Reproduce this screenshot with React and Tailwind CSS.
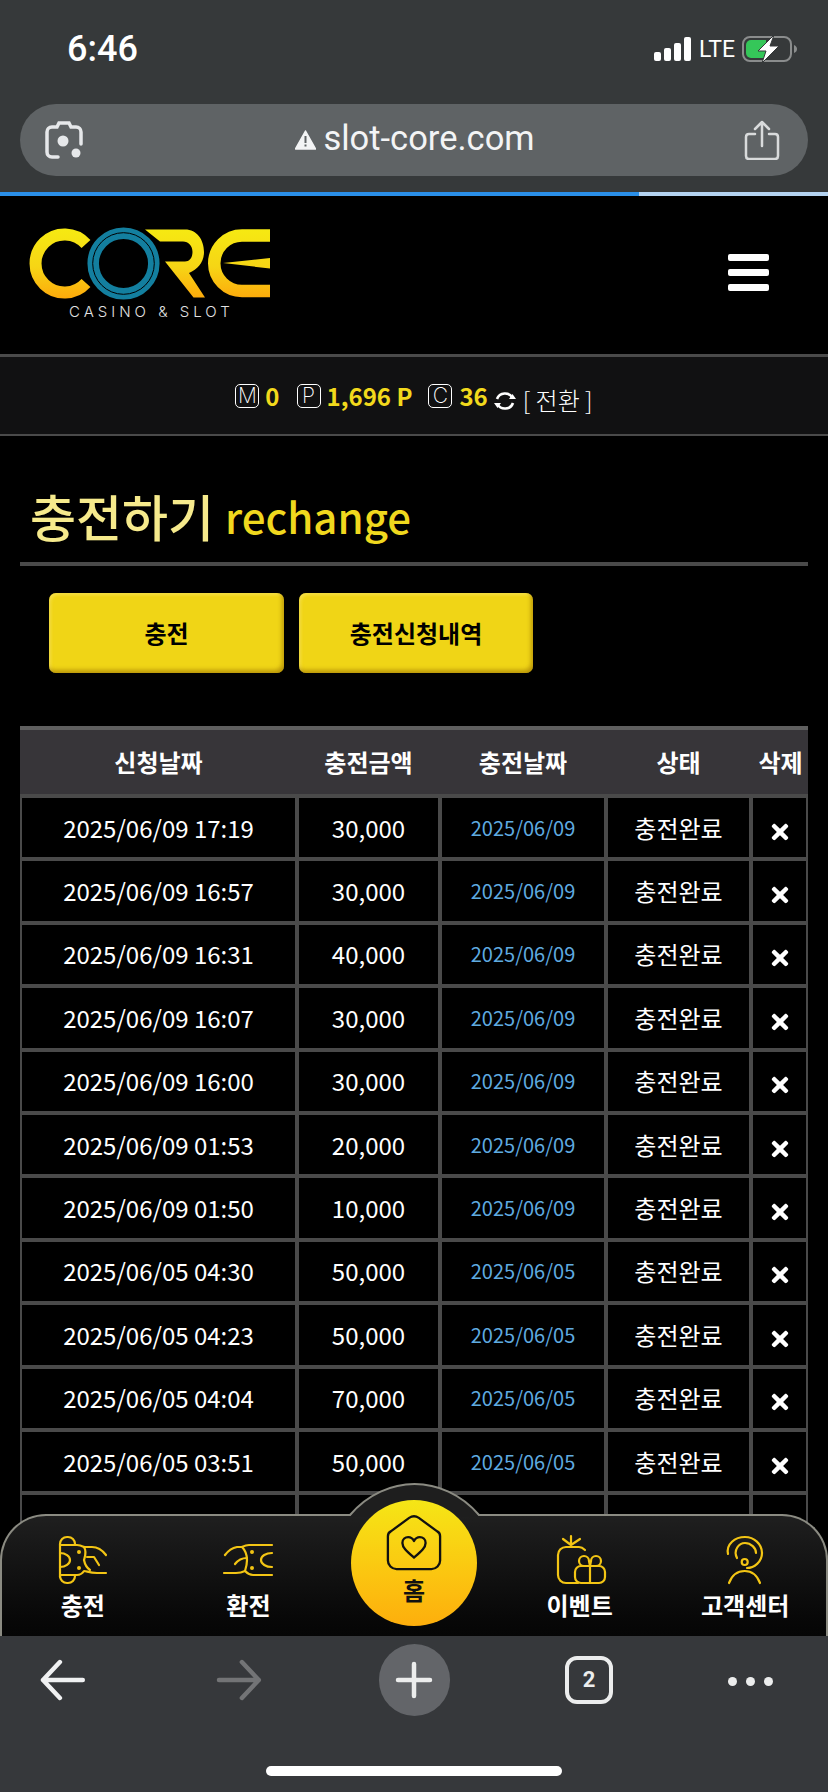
import React from 'react';
import { FaTimes } from 'react-icons/fa';

const rows = [
  ['2025/06/09 17:19', '30,000', '2025/06/09'],
  ['2025/06/09 16:57', '30,000', '2025/06/09'],
  ['2025/06/09 16:31', '40,000', '2025/06/09'],
  ['2025/06/09 16:07', '30,000', '2025/06/09'],
  ['2025/06/09 16:00', '30,000', '2025/06/09'],
  ['2025/06/09 01:53', '20,000', '2025/06/09'],
  ['2025/06/09 01:50', '10,000', '2025/06/09'],
  ['2025/06/05 04:30', '50,000', '2025/06/05'],
  ['2025/06/05 04:23', '50,000', '2025/06/05'],
  ['2025/06/05 04:04', '70,000', '2025/06/05'],
  ['2025/06/05 03:51', '50,000', '2025/06/05'],
  ['', '', ''],
];

const columns = 'grid grid-cols-[273px_139px_162px_141px_53px] gap-x-1';

function Logo() {
  return (
    <svg width="260" height="88" viewBox="0 0 260 88" className="block">
      <defs>
        <linearGradient id="coreGold" gradientUnits="userSpaceOnUse" x1="0" y1="8" x2="0" y2="79">
          <stop offset="0" stopColor="#f6ea12" />
          <stop offset="0.55" stopColor="#f6d515" />
          <stop offset="1" stopColor="#fda90b" />
        </linearGradient>
      </defs>
      <path d="M66 24 A29 29 0 1 0 66 63" fill="none" stroke="url(#coreGold)" strokeWidth="12" />
      <path
        d="M125 9.500 H165 C177 9.500 184 20 184 32 C184 42 178 49 169 53 L185 77.500 H173.500 L145 41.500 H165 C170 41.500 172.500 37 172.500 32 C172.500 26 168.500 21.500 163 21.500 H140 Z"
        fill="url(#coreGold)"
      />
      <path d="M250 15.500 H222 A27.700 27.700 0 0 0 222 71 H250" fill="none" stroke="url(#coreGold)" strokeWidth="12.500" />
      <path d="M203 43 L250 38 V48.500 Z" fill="url(#coreGold)" />
      <circle cx="103.500" cy="43.500" r="30.300" fill="none" stroke="#137f9f" strokeWidth="11.500" />
      <circle cx="103.500" cy="43.500" r="30.800" fill="none" stroke="#000" strokeWidth="1" />
    </svg>
  );
}

function BoxLetter({ children }) {
  return (
    <span className="flex w-6 h-6 items-center justify-center rounded-[5px] border border-white text-white text-[21px] font-extralight leading-none [font-family:Inter,sans-serif]">
      {children}
    </span>
  );
}

function RefreshIcon() {
  return (
    <svg width="22" height="22" viewBox="0 0 22 22" fill="none" stroke="#fff" strokeWidth="2.600" className="ml-[6px] mt-[11px]">
      <path d="M3 9 A8.500 8.500 0 0 1 18.500 8" />
      <path d="M19 13 A8.500 8.500 0 0 1 3.500 14" />
      <path d="M15 9 H22 L18.500 4 Z M0 13 H7 L3.500 18 Z" fill="#fff" stroke="none" />
    </svg>
  );
}

function ChargeIcon() {
  return (
    <svg width="60" height="60" viewBox="0 0 60 60" fill="none" stroke="#f3c514" strokeWidth="2.200" strokeLinecap="round" strokeLinejoin="round">
      <path d="M9 47 V14 A7 7 0 0 1 16 7 H17 A7 7 0 0 1 24 14 V15" />
      <path d="M9 46 A7 7 0 0 0 16 53 H17 A7 7 0 0 0 24 46 V45" />
      <path d="M9 15 H26 C29 15 31 16 33 17 H41 C47 17 52 21 55 25" />
      <path d="M9 45 H26 C29 45 31 44 33 41 C36 41 38 43 46 43 H55" />
      <path d="M9 23 A10 7 0 0 1 9 37" />
      <path d="M33 17 C36 22 34 26 33 30 C34 35 36 38 39 40" />
      <path d="M36 27 L43 27 L48 35" />
      <circle cx="28" cy="22" r="0.900" fill="#f3c514" />
      <circle cx="28" cy="38" r="0.900" fill="#f3c514" />
    </svg>
  );
}

function ExchangeIcon() {
  return (
    <svg width="60" height="60" viewBox="170 0 60 60" fill="none" stroke="#f3c514" strokeWidth="2.200" strokeLinecap="round" strokeLinejoin="round">
      <path d="M222 15 H199 C196 15 194 16 192 17 H187 C182 18 178 21 175 25" />
      <path d="M222 45 H203 C199 45 197 43 195 41 C191 43 188 43 186 43 H174" />
      <path d="M222 23 A11 7 0 0 0 222 37" />
      <path d="M192 17 C196 21 197 26 197 30 C197 35 196 38 195 41" />
      <path d="M197 28 C192 28 188 30 185 34" />
      <circle cx="202" cy="22" r="0.900" fill="#f3c514" />
      <circle cx="202" cy="38" r="0.900" fill="#f3c514" />
    </svg>
  );
}

function EventIcon() {
  return (
    <svg width="60" height="60" viewBox="8 0 60 60" fill="none" stroke="#f3c514" strokeWidth="2.200" strokeLinecap="round" strokeLinejoin="round">
      <path d="M43 20 C41 18 40 17 37 17 H24 A8 8 0 0 0 16 25 V45 A8 8 0 0 0 24 53 H36" />
      <path d="M29 15 V6 M29 15 L21 9 M29 15 L38 9" />
      <rect x="33" y="36" width="30" height="17" rx="6" />
      <path d="M48 36 V53" />
      <path d="M48 36 H42 A5 5 0 1 1 47 31 L48 36 L49 31 A5 5 0 1 1 54 36 H48" />
    </svg>
  );
}

function SupportIcon() {
  return (
    <svg width="60" height="60" viewBox="176 0 60 60" fill="none" stroke="#f3c514" strokeWidth="2.200" strokeLinecap="round" strokeLinejoin="round">
      <path d="M189 24 C187 14 196 7 206 7 C215 7 223 14 223 23 C223 32 215 38 208 38" />
      <path d="M198 28 C194 20 200 13 206 13 C212 13 217 18 217 23" />
      <circle cx="205.700" cy="32" r="3" />
      <path d="M190 53 C193 45 199 41 205.700 41 C212 41 218 45 221 53" />
    </svg>
  );
}

function NavItem({ icon, label, iconClass }) {
  return (
    <div className="flex flex-col items-center pt-[14px]">
      <div className={iconClass}>{icon}</div>
      <span className="mt-[-1px] text-white text-2xl font-bold leading-8 whitespace-nowrap">{label}</span>
    </div>
  );
}

function BottomNav() {
  return (
    <div className="absolute bottom-0 left-0 w-[828px] h-[122px] rounded-t-[46px] border-x-2 border-t-2 border-[#8b8b82] bg-gradient-to-b from-[#1f1f1f] to-[#050505]">
      <svg width="137" height="34" viewBox="0 0 137 34" className="absolute left-[344px] top-[-33px]">
        <path d="M0 33 H4 C22 12 46 1 68.500 1 C91 1 115 12 133 33 H137 V34 H0 Z" fill="#1e1e1e" />
        <path d="M0 32 H4 C22 11 46 1 68.500 1 C91 1 115 11 133 32 H137" fill="none" stroke="#8b8b82" strokeWidth="2" />
      </svg>
      <div className="grid grid-cols-5 -mx-0.5">
        <NavItem icon={<ChargeIcon />} label="충전" iconClass="-ml-[3px]" />
        <NavItem icon={<ExchangeIcon />} label="환전" iconClass="ml-[3px]" />
        <div />
        <NavItem icon={<EventIcon />} label="이벤트" />
        <NavItem icon={<SupportIcon />} label="고객센터" />
      </div>
      <div className="absolute left-[349px] top-[-16px] flex flex-col items-center w-[126px] h-[126px] rounded-full bg-gradient-to-b from-[#f5e616] to-[#fdae0c] pt-[14px]">
        <svg width="60" height="58" viewBox="43 33 60 60" fill="none" stroke="#111" strokeWidth="2.400" strokeLinejoin="round">
          <path d="M68 37 L49 51 C47 52 46 54 46 56 V81 A9 9 0 0 0 55 90 H91 A9 9 0 0 0 100 81 V56 C100 54 99 52 97 51 L78 37 C75 35 71 35 68 37 Z" />
          <path d="M73 78 C66 72 61 68 61 63 C61 59 64 57 67 57 C70 57 72 59 73 61 C74 59 76 57 79 57 C82 57 85 59 85 63 C85 68 80 72 73 78 Z" />
        </svg>
        <span className="mt-[2px] text-[#111] text-2xl font-bold leading-8">홈</span>
      </div>
    </div>
  );
}

export default function App() {
  return (
    <div className="w-[828px] h-[1792px] flex flex-col overflow-hidden bg-black [font-family:'Noto_Sans_CJK_KR',sans-serif]">
      {/* browser top */}
      <div className="h-[196px] shrink-0 flex flex-col bg-[#36393a]">
        <div className="h-[104px] flex items-start justify-between pl-[67px] pr-[30px] pt-[29px]">
          <span className="text-white text-[36px] font-medium leading-[40px] [font-family:Roboto,sans-serif]">6:46</span>
          <div className="flex items-center gap-[7px] h-[40px]">
            <svg width="38" height="24" viewBox="0 0 38 24" fill="#fff">
              <rect x="0" y="15" width="7" height="9" rx="2" />
              <rect x="10" y="11" width="7" height="13" rx="2" />
              <rect x="20" y="6" width="7" height="18" rx="2" />
              <rect x="30" y="0" width="7" height="24" rx="2" />
            </svg>
            <span className="text-white text-[23px] leading-none [font-family:Roboto,sans-serif] w-[36px] whitespace-nowrap">LTE</span>
            <svg width="56" height="28" viewBox="0 0 56 28">
              <rect x="1" y="2" width="48" height="24" rx="7" fill="none" stroke="#8b8d8d" strokeWidth="2" />
              <path d="M4 10 A5 5 0 0 1 9 5 H24 V23 H9 A5 5 0 0 1 4 18 Z" fill="#35c759" />
              <path d="M52 10 V18 C54 17 55 16 55 14 C55 12 54 11 52 10 Z" fill="#8b8d8d" />
              <path d="M32 0 L16 16 H24 L20 28 L37 11 H28 Z" fill="#fff" stroke="#36393a" strokeWidth="1" />
            </svg>
          </div>
        </div>
        <div className="mx-5 h-[72px] rounded-[36px] bg-[#5f6365] flex items-center justify-between pl-[24px] pr-[28px]">
          <svg width="40" height="40" viewBox="0 0 40 40" fill="none" stroke="#e6e8ea" strokeWidth="3.500" strokeLinecap="round">
            <path d="M14 37 H8 C5 37 3 35 3 32 V12 C3 9 5 7 8 7 H13 L15 3 H25 L27 7 H32 C35 7 37 9 37 12 V24" />
            <circle cx="19" cy="21" r="5.500" fill="#e6e8ea" stroke="none" />
            <circle cx="32" cy="33" r="4.500" fill="#e6e8ea" stroke="none" />
          </svg>
          <div className="flex items-center gap-[7px] ml-0.5">
            <svg width="21" height="20" viewBox="0 0 21 20">
              <path d="M10.500 1 L20.500 19 H0.500 Z" fill="#f3f4f5" stroke="#f3f4f5" strokeWidth="1.500" strokeLinejoin="round" />
              <rect x="9.500" y="6" width="2" height="7" fill="#5f6365" />
              <rect x="9.500" y="14.500" width="2" height="2" fill="#5f6365" />
            </svg>
            <span className="text-[#f3f4f5] text-[34.500px] leading-none pb-1 [font-family:Roboto,sans-serif]">slot-core.com</span>
          </div>
          <svg width="36" height="40" viewBox="0 0 36 40" fill="none" stroke="#d9dbdc" strokeWidth="2.500" strokeLinecap="round" strokeLinejoin="round">
            <path d="M11 14 H5 C3 14 2 15 2 17 V36 C2 38 3 39 5 39 H31 C33 39 34 38 34 36 V17 C34 15 33 14 31 14 H25" />
            <path d="M18 26 V2 M11 9 L18 2 L25 9" />
          </svg>
        </div>
        <div className="mt-4 h-1 bg-[#b4d3f1]">
          <div className="h-1 w-[639px] bg-[#2a8fe8]" />
        </div>
      </div>

      {/* page */}
      <div className="relative flex-1 overflow-hidden">
        <div className="h-[158px] flex items-start justify-between pl-[20px] pr-[59px] pt-[24px]">
          <div className="flex flex-col">
            <Logo />
            <span className="mt-[-5px] pl-[49px] text-[#e2e2e2] text-[15px] font-light leading-[18px] tracking-[4px] [font-family:Inter,sans-serif]">CASINO &amp; SLOT</span>
          </div>
          <div className="mt-[34px] flex flex-col gap-2">
            <div className="w-[41px] h-[7px] rounded-[2px] bg-white" />
            <div className="w-[41px] h-[7px] rounded-[2px] bg-white" />
            <div className="w-[41px] h-[7px] rounded-[2px] bg-white" />
          </div>
        </div>

        <div className="h-[82px] border-t-[3px] border-b-2 border-[#4a4a4a] bg-[#111112] flex items-center justify-center text-[#f2d91c] text-2xl font-semibold leading-none">
          <BoxLetter>M</BoxLetter>
          <span className="ml-[6px]">0</span>
          <span className="ml-[17px]"><BoxLetter>P</BoxLetter></span>
          <span className="ml-[6px]">1,696 P</span>
          <span className="ml-[16px]"><BoxLetter>C</BoxLetter></span>
          <span className="ml-[7px]">36</span>
          <RefreshIcon />
          <span className="ml-[7px] mt-[8px] text-white font-light whitespace-nowrap">[ 전환 ]</span>
        </div>

        <div className="mx-5 h-[130px] flex items-end border-b-4 border-[#4a4a4a] pl-[10px] pb-[14px]">
          <span className="text-[#f6ea8c] text-[50px] font-medium leading-[66px]">충전하기</span>
          <span className="ml-[11px] text-[#f0d81e] text-[42px] font-medium leading-[64px]">rechange</span>
        </div>

        <div className="flex gap-[15px] pl-[49px] pt-[27px]">
          <button className="w-[235px] h-[80px] rounded-[7px] bg-[#f0d516] shadow-[inset_-2px_-3px_4px_rgba(150,110,0,0.6),inset_2px_2px_3px_rgba(255,240,120,0.5)] text-black text-2xl font-bold">충전</button>
          <button className="w-[234px] h-[80px] rounded-[7px] bg-[#f0d516] shadow-[inset_-2px_-3px_4px_rgba(150,110,0,0.6),inset_2px_2px_3px_rgba(255,240,120,0.5)] text-black text-2xl font-bold">충전신청내역</button>
        </div>

        <div className="mx-5 mt-[53px]">
          <div className={`${columns} h-[68px] items-center border-t-4 border-[#5f5f5f] bg-[#373539] px-0.5 text-white text-2xl font-bold text-center`}>
            <span>신청날짜</span>
            <span>충전금액</span>
            <span>충전날짜</span>
            <span>상태</span>
            <span className="whitespace-nowrap pl-0.5">삭제</span>
          </div>
          <div className="flex flex-col gap-1 bg-[#4a4a4a] p-0.5 pt-1">
            {rows.map((row, i) => (
              <div key={i} className={`${columns} h-[59.4px] text-white text-center`}>
                <div className="bg-black flex items-center justify-center text-2xl">{row[0]}</div>
                <div className="bg-black flex items-center justify-center text-2xl">{row[1]}</div>
                <div className="bg-black flex items-center justify-center text-[20px] text-[#5fabe0]">{row[2]}</div>
                <div className="bg-black flex items-center justify-center text-2xl">{row[0] && '충전완료'}</div>
                <div className="bg-black flex items-center justify-center pt-2">{row[0] && <FaTimes size={24} />}</div>
              </div>
            ))}
          </div>
        </div>

        <BottomNav />
      </div>

      {/* browser bottom */}
      <div className="h-[156px] shrink-0 bg-[#36383b] flex flex-col items-center">
        <div className="w-full h-[120px] flex items-start justify-between pl-[40px] pr-[55px] pt-2">
          <svg width="46" height="72" viewBox="0 0 46 72" fill="none" stroke="#f0f1f2" strokeWidth="4.500" strokeLinecap="round" strokeLinejoin="round">
            <path d="M43 36 H3 M20 18 L3 36 L20 54" />
          </svg>
          <svg width="46" height="72" viewBox="0 0 46 72" fill="none" stroke="#737476" strokeWidth="4.500" strokeLinecap="round" strokeLinejoin="round" className="ml-[130px]">
            <path d="M3 36 H43 M26 18 L43 36 L26 54" />
          </svg>
          <div className="ml-[117px] w-[72px] h-[72px] rounded-full bg-[#636569] flex items-center justify-center">
            <svg width="38" height="38" viewBox="0 0 38 38" stroke="#eceded" strokeWidth="4.500" strokeLinecap="round">
              <path d="M19 3 V35 M3 19 H35" />
            </svg>
          </div>
          <div className="ml-[115px] mt-[12px] w-12 h-12 rounded-[12px] border-4 border-[#eceded] flex items-center justify-center text-[#eceded] text-[22px] font-bold leading-none [font-family:Roboto,sans-serif]">2</div>
          <div className="ml-[115px] mt-[33px] flex gap-[9px]">
            <div className="w-[9px] h-[9px] rounded-full bg-[#eceded]" />
            <div className="w-[9px] h-[9px] rounded-full bg-[#eceded]" />
            <div className="w-[9px] h-[9px] rounded-full bg-[#eceded]" />
          </div>
        </div>
        <div className="mt-[10px] w-[296px] h-[10px] rounded-full bg-white" />
      </div>
    </div>
  );
}
